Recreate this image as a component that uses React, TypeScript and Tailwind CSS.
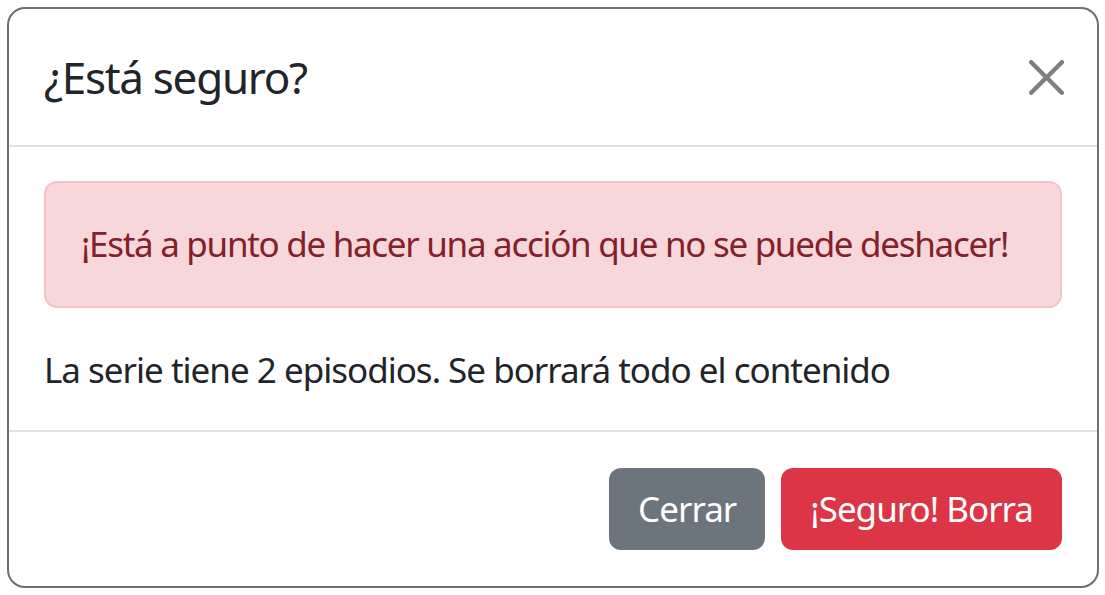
export default function App() {
  return (
    <div className="min-h-[595px] w-[1105px] bg-white p-[7px] font-['Noto_Sans',sans-serif]">
      <div className="flex w-[1092px] flex-col rounded-[18px] border-2 border-[#6f6f6f] bg-white">
        <div className="flex items-center justify-between border-b-2 border-[#dee2e6] pt-[34px] pr-[33px] pb-[34px] pl-[35px]">
          <h5 className="text-[44px] leading-[68px] font-normal tracking-[-1.3px] text-[#212529]">¿Está seguro?</h5>
          <button type="button" aria-label="Close" className="flex h-[36px] w-[36px] items-center justify-center opacity-50">
            <svg viewBox="0 0 16 16" width="35" height="35" fill="#000">
              <path d="M.293.293a1 1 0 0 1 1.414 0L8 6.586 14.293.293a1 1 0 1 1 1.414 1.414L9.414 8l6.293 6.293a1 1 0 0 1-1.414 1.414L8 9.414l-6.293 6.293a1 1 0 0 1-1.414-1.414L6.586 8 .293 1.707a1 1 0 0 1 0-1.414z" />
            </svg>
          </button>
        </div>
        <div className="border-b-2 border-[#dee2e6] px-[35px] pt-[34px] pb-[33px] text-[35px] leading-[54px] tracking-[-1px]">
          <div className="mb-[35px] rounded-[13px] border-2 border-[#f5c2c7] bg-[#f8d7da] px-[35px] pt-[34px] pb-[35px] whitespace-nowrap tracking-[-1.3px] text-[#842029]">
            ¡Está a punto de hacer una acción que no se puede deshacer!
          </div>
          <p className="text-[#212529]">La serie tiene 2 episodios. Se borrará todo el contenido</p>
        </div>
        <div className="flex items-center justify-end gap-[16px] px-[35px] pt-[36px] pb-[36px] text-[35px] leading-[54px] tracking-[-1px]">
          <button type="button" className="h-[82px] rounded-[12px] bg-[#6c757d] px-[29px] text-white">
            Cerrar
          </button>
          <button type="button" className="h-[82px] rounded-[12px] bg-[#dc3545] px-[29px] text-white">
            ¡Seguro! Borra
          </button>
        </div>
      </div>
    </div>
  );
}
